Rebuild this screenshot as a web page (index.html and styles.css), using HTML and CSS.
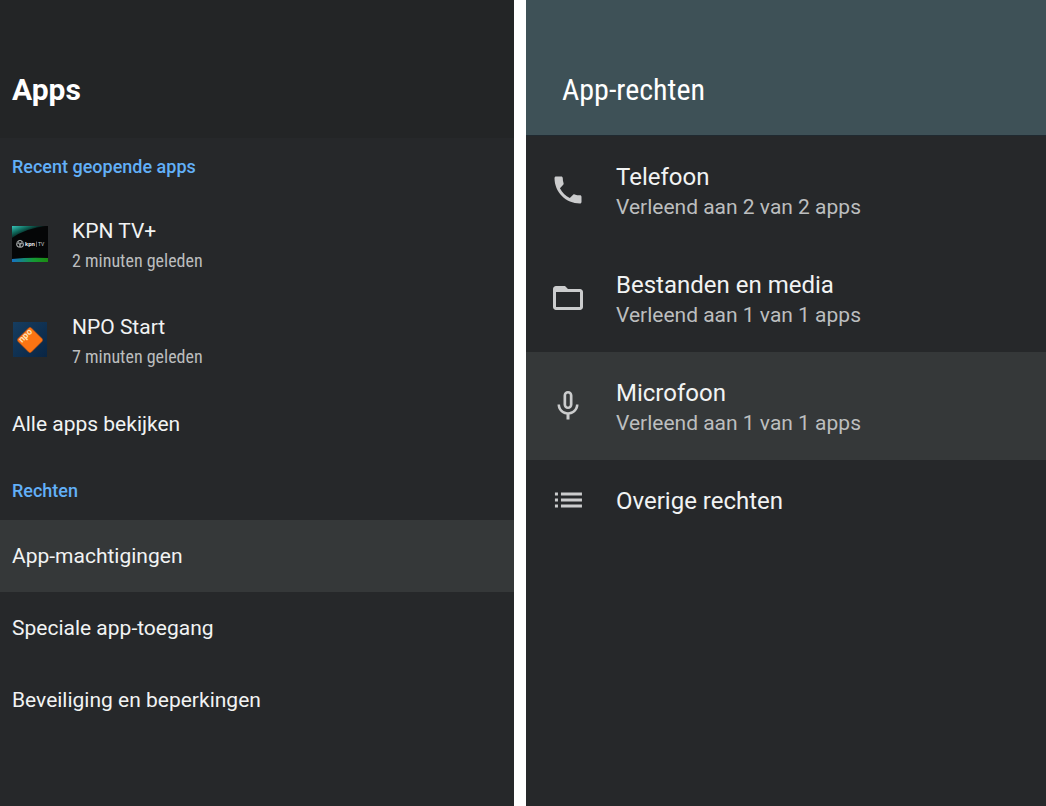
FILE: index.html
```html
<!DOCTYPE html>
<html lang="nl">
<head>
<meta charset="utf-8">
<meta name="viewport" content="width=device-width, initial-scale=1">
<title>Apps</title>
<link rel="stylesheet" href="styles.css">
</head>
<body>
<main class="screens">
  <section class="panel apps">
    <header class="panel-header"><h1>Apps</h1></header>
    <h2 class="group-label">Recent geopende apps</h2>
    <button class="row app-row" type="button">
      <svg class="app-icon" viewBox="0 0 36 36" aria-hidden="true">
        <defs>
          <linearGradient id="kpn-top" x1="0" y1="0" x2="0.6" y2="0.5">
            <stop offset="0" stop-color="#38c4ba"/><stop offset=".5" stop-color="#0f6a5c"/><stop offset="1" stop-color="#050607"/>
          </linearGradient>
          <linearGradient id="kpn-bar"><stop offset="0" stop-color="#1672c4"/><stop offset=".6" stop-color="#159a35"/><stop offset="1" stop-color="#1c8c12"/></linearGradient>
        </defs>
        <path fill="#050607" d="M0 0h36v36H0z"/>
        <path fill="url(#kpn-top)" d="M0 0h35Q14 2 0 12z"/>
        <path fill="url(#kpn-bar)" d="M0 33q18-2 36-1v4H0z"/>
        <g fill="none" stroke="#c8cccc" stroke-width=".6"><circle cx="8" cy="16.300" r="2"/><circle cx="6.800" cy="18.800" r="2"/><circle cx="9.400" cy="19" r="2"/><circle cx="8" cy="18" r="3.500"/></g>
        <text x="13" y="20" class="kpn-word">kpn</text>
        <path stroke="#aaa" stroke-width=".6" d="M24.500 15.500v5.500"/>
        <text x="26" y="20" class="kpn-tv">TV</text>
      </svg>
      <span class="copy"><span class="title">KPN TV+</span><span class="detail">2 minuten geleden</span></span>
    </button>
    <button class="row app-row" type="button">
      <svg class="app-icon" viewBox="0 0 36 36" aria-hidden="true">
        <defs><linearGradient id="npo-bg" x2="1" y2="1"><stop offset="0" stop-color="#163d60"/><stop offset="1" stop-color="#092544"/></linearGradient></defs>
        <path fill="url(#npo-bg)" d="M1 0h34v35H1z"/>
        <rect x="8.500" y="8.500" width="19" height="19" rx="2" fill="#fb7413" stroke="#a34716" stroke-width=".6" transform="rotate(45 18 18)"/>
        <text class="npo-word" transform="translate(10 21) rotate(-45)">npo</text>
      </svg>
      <span class="copy"><span class="title">NPO Start</span><span class="detail">7 minuten geleden</span></span>
    </button>
    <button class="row" type="button">Alle apps bekijken</button>
    <h2 class="group-label spaced">Rechten</h2>
    <button class="row selected" type="button">App-machtigingen</button>
    <button class="row" type="button">Speciale app-toegang</button>
    <button class="row" type="button">Beveiliging en beperkingen</button>
  </section>

  <section class="panel permissions">
    <header class="panel-header"><h1>App-rechten</h1></header>
    <button class="row" type="button">
      <svg class="icon" viewBox="0 0 24 24" aria-hidden="true"><path d="M20 15.500c-1.250 0-2.450-.2-3.570-.57-.35-.11-.74-.03-1.020.24l-2.200 2.200c-2.830-1.440-5.150-3.750-6.590-6.590l2.200-2.200c.28-.28.36-.67.25-1.020C8.700 6.450 8.500 5.250 8.500 4c0-.55-.45-1-1-1H4c-.55 0-1 .45-1 1 0 9.390 7.610 17 17 17 .55 0 1-.45 1-1v-3.500c0-.55-.45-1-1-1z"/></svg>
      <span class="copy"><span class="title">Telefoon</span><span class="detail">Verleend aan 2 van 2 apps</span></span>
    </button>
    <button class="row" type="button">
      <svg class="icon" viewBox="0 0 24 24" aria-hidden="true"><path d="M20 6h-8l-2-2H4c-1.100 0-1.990.9-1.990 2L2 18c0 1.100.9 2 2 2h16c1.100 0 2-.9 2-2V8c0-1.100-.9-2-2-2zm0 12H4V8h16v10z"/></svg>
      <span class="copy"><span class="title">Bestanden en media</span><span class="detail">Verleend aan 1 van 1 apps</span></span>
    </button>
    <button class="row selected" type="button">
      <svg class="icon" viewBox="0 0 24 24" aria-hidden="true"><path d="M12 14c1.660 0 3-1.340 3-3V5c0-1.660-1.340-3-3-3S9 3.340 9 5v6c0 1.660 1.340 3 3 3zm-1.200-9.100c0-.66.54-1.200 1.200-1.200s1.200.54 1.200 1.200l-.01 6.200c0 .66-.53 1.200-1.190 1.200s-1.200-.54-1.200-1.200V4.900zM17.300 11c0 3-2.540 5.100-5.300 5.100S6.700 14 6.700 11H5c0 3.410 2.720 6.230 6 6.720V21h2v-3.280c3.280-.48 6-3.300 6-6.720h-1.700z"/></svg>
      <span class="copy"><span class="title">Microfoon</span><span class="detail">Verleend aan 1 van 1 apps</span></span>
    </button>
    <button class="row single" type="button">
      <svg class="icon" viewBox="0 0 24 24" aria-hidden="true"><path d="M3.300 6.300h2v2h-2zm0 4h2v2h-2zm0 4h2v2h-2zM7.300 6.300h14v2h-14zm0 4h14v2h-14zm0 4h14v2h-14z"/></svg>
      <span class="title">Overige rechten</span>
    </button>
  </section>
</main>
</body>
</html>
```
FILE: styles.css
```css
* { box-sizing: border-box; }

body {
  margin: 0;
  background: #fff;
  color: #f1f3f3;
  font-family: Roboto, "Liberation Sans", sans-serif;
}

.screens {
  display: grid;
  grid-template-columns: 514fr 520fr;
  gap: 12px;
  min-height: 100vh;
}

.panel { background: #26282a; min-width: 0; }

.panel-header {
  display: flex;
  align-items: flex-end;
  padding: 0 12px;
}

h1, h2 { margin: 0; }

.row {
  display: flex;
  align-items: center;
  width: 100%;
  border: 0;
  background: none;
  color: inherit;
  font: inherit;
  text-align: left;
}

.selected { background: #353839; }

.copy { display: flex; flex-direction: column; padding-top: 4px; }

.apps .panel-header {
  height: 138px;
  padding-bottom: 30px;
  background: #232526;
}

.apps h1 { font-size: 30px; line-height: 36px; font-weight: 700; color: #fff; }

.group-label {
  padding: 18px 12px;
  font-size: 18px;
  line-height: 22px;
  font-weight: 500;
  color: #62b0f8;
}

.group-label.spaced { padding-top: 20px; }

.apps .row {
  min-height: 72px;
  padding: 0 12px;
  gap: 24px;
  font-size: 21px;
  line-height: 30px;
}

.apps .app-row { min-height: 96px; }

.apps .detail {
  font-family: "Roboto Condensed", Roboto, "Liberation Sans", sans-serif;
  font-size: 18px;
  color: #bcbebf;
}

.app-icon { flex: none; width: 36px; height: 36px; }

.kpn-word { font-size: 6px; font-weight: 700; fill: #e6e8e8; }
.kpn-tv { font-size: 5px; fill: #d2d4d4; }
.npo-word { font-size: 9px; font-weight: 700; fill: #ffe2b5; }

.permissions .panel-header {
  height: 136px;
  padding: 0 36px 27px;
  background: #3e5157;
  border-bottom: 1px solid #202a31;
}

.permissions h1 {
  font-family: "Roboto Condensed", Roboto, "Liberation Sans", sans-serif;
  font-size: 30px;
  line-height: 36px;
  font-weight: 400;
  color: #fff;
}

.permissions .row {
  min-height: 108px;
  padding: 0 24px;
  gap: 30px;
  font-size: 24px;
  line-height: 30px;
}

.permissions .single { min-height: 82px; }

.permissions .detail { font-size: 21px; color: #bcbebf; }

.icon { flex: none; width: 36px; height: 36px; fill: #cbcccd; }
```
